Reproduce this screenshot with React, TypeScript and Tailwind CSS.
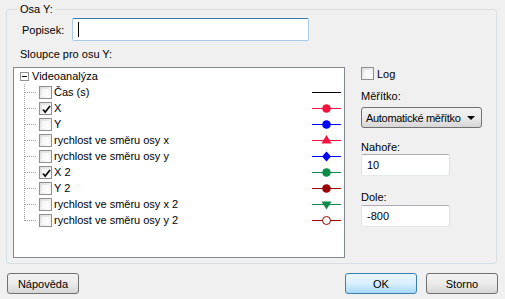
import React from "react";

type Marker = "none" | "circle" | "tri-up" | "tri-down" | "diamond" | "ring";

const columns: { name: string; checked: boolean; color: string; marker: Marker }[] = [
  { name: "Čas (s)", checked: false, color: "#000000", marker: "none" },
  { name: "X", checked: true, color: "#f5123e", marker: "circle" },
  { name: "Y", checked: false, color: "#0000ff", marker: "circle" },
  { name: "rychlost ve směru osy x", checked: false, color: "#f5123e", marker: "tri-up" },
  { name: "rychlost ve směru osy y", checked: false, color: "#0000ff", marker: "diamond" },
  { name: "X 2", checked: true, color: "#0b8a48", marker: "circle" },
  { name: "Y 2", checked: false, color: "#990000", marker: "circle" },
  { name: "rychlost ve směru osy x 2", checked: false, color: "#0b8a48", marker: "tri-down" },
  { name: "rychlost ve směru osy y 2", checked: false, color: "#990000", marker: "ring" },
];

function SeriesIcon({ color, marker }: { color: string; marker: Marker }) {
  return (
    <svg width="29" height="16" viewBox="0 0 29 16" className="shrink-0">
      <line x1="0" y1="8.5" x2="29" y2="8.5" stroke={color} strokeWidth="1" />
      {marker === "circle" && <circle cx="14.5" cy="8.5" r="4.3" fill={color} />}
      {marker === "ring" && <circle cx="14.5" cy="8.5" r="4" fill="#fff" stroke={color} strokeWidth="1" />}
      {marker === "tri-up" && <polygon points="14.5,3 9.5,11.5 19.5,11.5" fill={color} />}
      {marker === "tri-down" && <polygon points="9.5,5.5 19.5,5.5 14.5,13.5" fill={color} />}
      {marker === "diamond" && <polygon points="14.5,3.5 19,8.5 14.5,13.5 10,8.5" fill={color} />}
    </svg>
  );
}

function CheckBox({ checked }: { checked: boolean }) {
  return (
    <div className="relative h-[13px] w-[13px] shrink-0 border border-[#8e8f8f] bg-gradient-to-br from-[#dcdcdc] to-[#ffffff] p-[2px]">
      <div className="h-full w-full bg-gradient-to-br from-[#f4f4f4] to-[#ffffff]" />
      {checked && (
        <svg width="11" height="11" viewBox="0 0 11 11" className="absolute left-[1px] top-[1px]">
          <path d="M2 5.5 L4.2 8 L9 2" fill="none" stroke="#111" strokeWidth="1.8" />
        </svg>
      )}
    </div>
  );
}

function Connector({ last }: { last: boolean }) {
  return (
    <svg width="14" height="16" viewBox="0 0 14 16" className="shrink-0">
      <line x1="1.5" y1="0" x2="1.5" y2={last ? 9 : 16} stroke="#a0a0a0" strokeDasharray="1 1" />
      <line x1="2" y1="8.5" x2="14" y2="8.5" stroke="#a0a0a0" strokeDasharray="1 1" />
    </svg>
  );
}

function TextInput({ value, focused }: { value: string; focused?: boolean }) {
  return (
    <div
      className={
        focused
          ? "flex h-full w-full items-center rounded-[2px] border border-[#a9cbe6] border-t-[#3d7bad] bg-white px-[5px]"
          : "flex h-full w-full items-center rounded-[2px] border border-[#e3e9ef] border-t-[#abadb3] border-l-[#e2e3ea] border-r-[#dbdfe6] bg-white px-[5px]"
      }
    >
      {value}
      {focused && <div className="h-[15px] w-px bg-black" />}
    </div>
  );
}

function Button({ label, primary }: { label: string; primary?: boolean }) {
  return (
    <div
      className={
        primary
          ? "flex h-[21px] w-[72px] items-center justify-center rounded-[3px] border border-[#3c7fb1] bg-gradient-to-b from-[#eaf6fd] via-[#d9f0fc] to-[#a7d9f5]"
          : "flex h-[21px] w-[72px] items-center justify-center rounded-[3px] border border-[#707070] bg-gradient-to-b from-[#f2f2f2] via-[#ebebeb] to-[#d6d6d6]"
      }
    >
      {label}
    </div>
  );
}

export default function App() {
  return (
    <div
      className="h-[299px] w-[505px] overflow-hidden bg-[#f0f0f0] text-[11px] leading-[16px] text-black"
      style={{ fontFamily: '"Liberation Sans", Arial, sans-serif' }}
    >
      <fieldset className="mx-[6px] mt-[2px] h-[262px] w-[491px] rounded-[3px] border border-[#d5dfe5] pl-[6px]">
        <legend className="ml-[5px] px-[2px] leading-[14px]">Osa Y:</legend>

        {/* Popisek */}
        <div className="mt-[2px] flex h-[23px] items-center">
          <span className="ml-[9px] w-[50px]">Popisek:</span>
          <div className="h-full w-[237px]">
            <TextInput value="" focused />
          </div>
        </div>

        <div className="mt-[5px] ml-[7px]">Sloupce pro osu Y:</div>

        <div className="mt-[5px] flex">
          {/* tree */}
          <div className="h-[191px] w-[332px] border border-[#828790] bg-white">
            <div className="flex h-4 items-center">
              <div className="ml-[6px] flex h-[9px] w-[9px] items-center justify-center border border-[#919191] bg-white">
                <div className="h-px w-[5px] bg-black" />
              </div>
              <span className="ml-[3px]">Videoanalýza</span>
            </div>
            {columns.map((c, i) => (
              <div key={c.name} className="flex h-4 items-center">
                <div className="ml-[9px]">
                  <Connector last={i === columns.length - 1} />
                </div>
                <div className="ml-[2px]">
                  <CheckBox checked={c.checked} />
                </div>
                <span className="ml-[2px] flex-1 whitespace-nowrap">{c.name}</span>
                <div className="mr-[3px]">
                  <SeriesIcon color={c.color} marker={c.marker} />
                </div>
              </div>
            ))}
          </div>

          {/* right panel */}
          <div className="ml-[16px] flex flex-col leading-[14px]">
            <div className="flex h-[13px] items-center">
              <CheckBox checked={false} />
              <span className="ml-[3px]">Log</span>
            </div>
            <div className="mt-[9px]">Měřítko:</div>
            <div className="mt-[4px] flex h-[21px] w-[121px] items-center justify-between rounded-[3px] border border-[#707070] bg-gradient-to-b from-[#f2f2f2] via-[#ebebeb] to-[#d6d6d6] pl-[4px] pr-[6px]">
              <span className="whitespace-nowrap tracking-[-0.3px]">Automatické měřítko</span>
              <svg width="8" height="4" viewBox="0 0 8 4">
                <polygon points="0,0 8,0 4,4" fill="#000" />
              </svg>
            </div>
            <div className="mt-[12px]">Nahoře:</div>
            <div className="h-[22px] w-[89px]">
              <TextInput value="10" />
            </div>
            <div className="mt-[14px]">Dole:</div>
            <div className="mt-[1px] h-[22px] w-[89px]">
              <TextInput value="-800" />
            </div>
          </div>
        </div>
      </fieldset>

      <div className="mt-[9px] flex px-[7px]">
        <Button label="Nápověda" />
        <div className="flex-1" />
        <Button label="OK" primary />
        <div className="w-[9px]" />
        <Button label="Storno" />
      </div>
    </div>
  );
}
